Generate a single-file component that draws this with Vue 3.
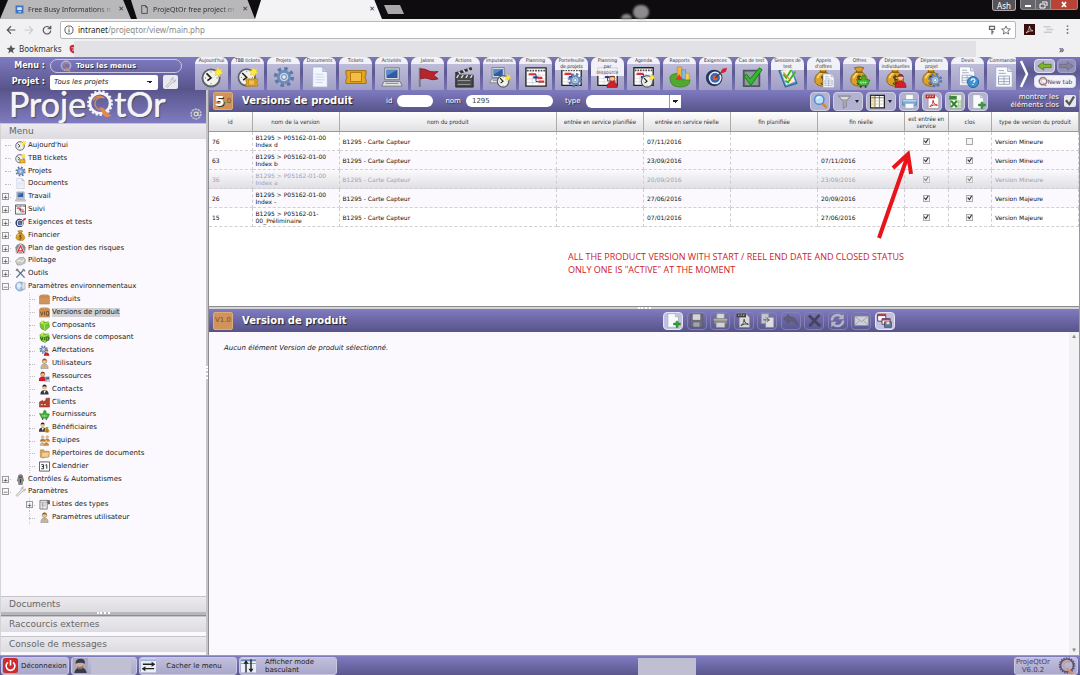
<script setup>
import { ref } from 'vue'

const modules = [
  { label: "Aujourd'hui", icon: 'clock' },
  { label: 'TBB tickets', icon: 'clockticket' },
  { label: 'Projets', icon: 'gear' },
  { label: 'Documents', icon: 'doc' },
  { label: 'Tickets', icon: 'ticket' },
  { label: 'Activités', icon: 'computer' },
  { label: 'Jalons', icon: 'flag' },
  { label: 'Actions', icon: 'clap' },
  { label: 'Imputations', icon: 'computerclock' },
  { label: 'Planning', icon: 'planning' },
  { label: 'Portefeuille\nde projets', icon: 'planninggear' },
  { label: 'Planning\npar\nressource', icon: 'planninguser' },
  { label: 'Agenda', icon: 'agenda' },
  { label: 'Rapports', icon: 'report' },
  { label: 'Exigences', icon: 'target' },
  { label: 'Cas de test', icon: 'testcase' },
  { label: 'Sessions de\ntest', icon: 'session' },
  { label: "Appels\nd'offres", icon: 'bagdoc' },
  { label: 'Offres', icon: 'bagcart' },
  { label: 'Dépenses\nindividuelles', icon: 'baguser' },
  { label: 'Dépenses\nprojet', icon: 'baggear' },
  { label: 'Devis', icon: 'quote' },
  { label: 'Commandes', icon: 'order' },
]

const tree = [
  { label: "Aujourd'hui", icon: 'clock' },
  { label: 'TBB tickets', icon: 'clockticket' },
  { label: 'Projets', icon: 'gear' },
  { label: 'Documents', icon: 'doc' },
  { label: 'Travail', icon: 'computer', box: '+' },
  { label: 'Suivi', icon: 'planning', box: '+' },
  { label: 'Exigences et tests', icon: 'target', box: '+' },
  { label: 'Financier', icon: 'bag', box: '+' },
  { label: 'Plan de gestion des risques', icon: 'risk', box: '+' },
  { label: 'Pilotage', icon: 'pilot', box: '+' },
  { label: 'Outils', icon: 'tools', box: '+' },
  { label: 'Paramètres environnementaux', icon: 'globe', box: '−' },
  { label: 'Produits', icon: 'box', sub: true },
  { label: 'Versions de produit', icon: 'boxv', sub: true, active: true },
  { label: 'Composants', icon: 'component', sub: true },
  { label: 'Versions de composant', icon: 'componentv', sub: true },
  { label: 'Affectations', icon: 'gearuser', sub: true },
  { label: 'Utilisateurs', icon: 'user', sub: true },
  { label: 'Ressources', icon: 'resource', sub: true },
  { label: 'Contacts', icon: 'contact', sub: true },
  { label: 'Clients', icon: 'factory', sub: true },
  { label: 'Fournisseurs', icon: 'cart', sub: true },
  { label: 'Bénéficiaires', icon: 'payee', sub: true },
  { label: 'Equipes', icon: 'team', sub: true },
  { label: 'Répertoires de documents', icon: 'folder', sub: true },
  { label: 'Calendrier', icon: 'calendar', sub: true },
  { label: 'Contrôles & Automatismes', icon: 'robot', box: '+' },
  { label: 'Paramètres', icon: 'wrench', box: '−' },
  { label: 'Listes des types', icon: 'list', sub: true, box: '+' },
  { label: 'Paramètres utilisateur', icon: 'user', sub: true },
]

const columns = [
  { label: 'id', cls: 'c-id' },
  { label: 'nom de la version', cls: 'c-name' },
  { label: 'nom du produit', cls: 'c-product' },
  { label: 'entrée en service planifiée', cls: 'c-date' },
  { label: 'entrée en service réelle', cls: 'c-date' },
  { label: 'fin planifiée', cls: 'c-date' },
  { label: 'fin réelle', cls: 'c-date' },
  { label: 'est entrée en service', cls: 'c-flag' },
  { label: 'clos', cls: 'c-flag' },
  { label: 'type de version du produit', cls: 'c-type' },
]

const rows = ref([
  { id: 76, name: 'B1295 > P05162-01-00 Index d', start: '07/11/2016', end: '', live: true, closed: false, type: 'Version Mineure' },
  { id: 63, name: 'B1295 > P05162-01-00 Index b', start: '23/09/2016', end: '07/11/2016', live: true, closed: true, type: 'Version Mineure' },
  { id: 36, name: 'B1295 > P05162-01-00 Index a', start: '20/09/2016', end: '23/09/2016', live: true, closed: true, type: 'Version Mineure', hover: true },
  { id: 26, name: 'B1295 > P05162-01-00 Index -', start: '27/06/2016', end: '20/09/2016', live: true, closed: true, type: 'Version Majeure' },
  { id: 15, name: 'B1295 > P05162-01-00_Préliminaire', start: '07/01/2016', end: '27/06/2016', live: true, closed: true, type: 'Version Majeure' },
])

const listTools = [
  { icon: 'search', label: 'Rechercher' },
  { icon: 'funnel', label: 'Filtrer', menu: true },
  { icon: 'columns', label: 'Colonnes', menu: true },
  { icon: 'printer', label: 'Imprimer' },
  { icon: 'pdf', label: 'Exporter en PDF' },
  { icon: 'excel', label: 'Exporter en CSV' },
  { icon: 'newdoc', label: 'Créer' },
]

const detailTools = [
  { icon: 'newdoc', label: 'Créer', on: true },
  { icon: 'save', label: 'Enregistrer' },
  { icon: 'printer', label: 'Imprimer', gray: true },
  { icon: 'pdf', label: 'PDF', gray: true },
  { icon: 'copy', label: 'Copier' },
  { icon: 'undo', label: 'Annuler' },
  { icon: 'delete', label: 'Supprimer' },
  { icon: 'refresh', label: 'Rafraîchir' },
  { icon: 'mail', label: 'Courriel' },
  { icon: 'multi', label: 'Mise à jour multiple', on: true },
]

const nameFilter = ref('1295')
const idFilter = ref('')
const showClosed = ref(true)
</script>

<template>
  <div class="page">
    <svg class="sprite" aria-hidden="true">
      <symbol id="gear" viewBox="0 0 24 24">
        <circle cx="12" cy="12" r="9" fill="none" stroke="#5878a6" stroke-width="4" stroke-dasharray="3.6 3.47" />
        <circle cx="12" cy="12" r="6.2" fill="#c3d3e8" stroke="#6c8bb8" stroke-width="3" />
        <circle cx="12" cy="12" r="2.6" fill="#e9eef6" stroke="#5878a6" />
      </symbol>
      <symbol id="clock" viewBox="0 0 24 24">
        <circle cx="11" cy="13" r="9.4" fill="#f3f3ee" stroke="#5c6068" stroke-width="2" />
        <path d="M6 8l5 5-4 3" fill="none" stroke="#222" stroke-width="1.8" />
        <path d="M11 6v1M11 19v1M4.500 13h1M17 13h1" stroke="#555" />
        <path d="M18.500 1l1.500 3 3-1-1 3 2 2-3 .7-.7 3-2.300-2-3 1 1-3-2-2 3-.7z" fill="#ffe93a" stroke="#e4c530" stroke-width=".5" />
      </symbol>
      <symbol id="ticket" viewBox="0 0 24 24">
        <path d="M1 5h22v4q-2.500 3 0 6v4H1v-4q2.500-3 0-6z" fill="#e6a41f" stroke="#9a6a10" />
        <path d="M6 7h12v10H6z" fill="#f4bd43" stroke="#a87512" />
      </symbol>
      <symbol id="clockticket" viewBox="0 0 24 24">
        <use href="#clock" width="23" height="23" />
        <use href="#ticket" x="8" y="11" width="16" height="14" />
      </symbol>
      <symbol id="doc" viewBox="0 0 24 24">
        <path d="M4 1h11l5 5v17H4z" fill="#f3f6fc" stroke="#a9b2cc" />
        <path d="M15 1v5h5z" fill="#c5cde2" stroke="#a9b2cc" />
        <path d="M7 9h9M7 12h10M7 15h10M7 18h8" stroke="#c8d2ea" />
      </symbol>
      <symbol id="computer" viewBox="0 0 24 24">
        <path d="M4 2h16v13H4z" fill="#d7dbe0" stroke="#6b7480" />
        <path d="M6 4h12v9H6z" fill="#2d5ca4" />
        <path d="M6 4h12L6 11z" fill="#5d8acb" />
        <path d="M3 17h18l2 5H1z" fill="#e3e3e3" stroke="#70777f" />
        <path d="M5 19h14" stroke="#888" />
      </symbol>
      <symbol id="flag" viewBox="0 0 24 24">
        <path d="M3 2v21" stroke="#777" stroke-width="2" />
        <path d="M4 3q5 0 8 2t11 1l-5 4 5 4q-6 2-10 0t-9 0z" fill="#b8262d" stroke="#8d1920" />
      </symbol>
      <symbol id="clap" viewBox="0 0 24 24">
        <path d="M3 10h19v13H3z" fill="#484848" stroke="#222" />
        <path d="M2 7L20 1l1 3L3 10z" fill="#333" />
        <path d="M6 6l2 2.500M11 4l2 3M16 2.500l2 3M6 10l-2 3M11 10l-2 3M16 10l-2 3M21 10l-2 3" stroke="#ddd" stroke-width="1.600" />
        <path d="M5 16h14M5 20h14" stroke="#aaa" />
      </symbol>
      <symbol id="computerclock" viewBox="0 0 24 24">
        <use href="#computer" width="20" height="20" />
        <use href="#clock" x="8" y="8" width="16" height="16" />
      </symbol>
      <symbol id="planning" viewBox="0 0 24 24">
        <path d="M1 2h22v20H1z" fill="#fff" stroke="#222" stroke-width="1.500" />
        <path d="M2 5h20" stroke="#555" stroke-width="2" stroke-dasharray="2 1" />
        <path d="M2 10h20M2 14h20M2 18h20M8 6v15M15 6v15" stroke="#c9c9d6" stroke-width=".7" />
        <path d="M4 9h8M14 13h5M15 17h6" stroke="#dc3037" stroke-width="2.400" />
        <path d="M9 12.500h5" stroke="#2b3fae" stroke-width="2.400" />
        <path d="M12 9v8h3" fill="none" stroke="#333" />
      </symbol>
      <symbol id="planninggear" viewBox="0 0 24 24">
        <use href="#planning" width="23" height="23" />
        <use href="#gear" x="7" y="7" width="17" height="17" />
      </symbol>
      <symbol id="user" viewBox="0 0 24 24">
        <path d="M4 23q0-10 8-10t8 10z" fill="#b9b9b9" stroke="#777" />
        <path d="M10 14l2 7 3-7z" fill="#e9a54b" />
        <circle cx="12" cy="7" r="5" fill="#f0c795" stroke="#8a6333" />
        <path d="M7 6q1-5 5-5t5 5q-5-2-10 0z" fill="#8d6030" />
      </symbol>
      <symbol id="reduser" viewBox="0 0 24 24">
        <path d="M3 23q0-10 9-10t9 10z" fill="#d3202b" stroke="#8d1018" />
        <circle cx="12" cy="7" r="5" fill="#f0c795" stroke="#8a3323" />
        <path d="M7 6q1-5 5-5t5 5q-5-2-10 0z" fill="#8d3020" />
      </symbol>
      <symbol id="planninguser" viewBox="0 0 24 24">
        <use href="#planning" width="23" height="23" />
        <use href="#reduser" x="9" y="9" width="15" height="15" />
      </symbol>
      <symbol id="agenda" viewBox="0 0 24 24">
        <use href="#planning" width="23" height="23" />
        <use href="#clock" x="8" y="8" width="16" height="16" />
      </symbol>
      <symbol id="report" viewBox="0 0 24 24">
        <path d="M1 13q0-4 8-5l1 7 13 0q0 8-11 8T1 13z" fill="#4faa2f" stroke="#2d7718" stroke-width=".7" />
        <path d="M9 1h5v12H9z" fill="#f2b632" stroke="#b8801c" stroke-width=".6" />
        <path d="M14 4h4v10h-4z" fill="#8bb9e6" stroke="#4d7dab" stroke-width=".6" />
        <path d="M18 8h4v7h-4z" fill="#f3d34c" stroke="#b8901c" stroke-width=".6" />
        <path d="M7 15l4-6 4 6z" fill="#d83a2c" />
      </symbol>
      <symbol id="target" viewBox="0 0 24 24">
        <circle cx="10" cy="13" r="9" fill="#23365f" />
        <circle cx="11" cy="13" r="7" fill="#e8edf6" />
        <circle cx="11" cy="13" r="5.300" fill="#3e64b0" />
        <circle cx="11" cy="13" r="2.600" fill="#e8602a" />
        <path d="M11 13l8-7" stroke="#444" stroke-width="1.500" />
        <path d="M17 7l2-4 5-1-1 4-4 2z" fill="#d3262e" />
      </symbol>
      <symbol id="testcase" viewBox="0 0 24 24">
        <path d="M3 5h17v17H3z" fill="#8f98a0" stroke="#4f575e" stroke-width="2" />
        <path d="M3 11l3-2 4 5L20 2l3 2-12 17z" fill="#35b62d" stroke="#16791a" />
      </symbol>
      <symbol id="session" viewBox="0 0 24 24">
        <path d="M2 5l13-2 7 16-13 4z" fill="#3f8ccf" stroke="#1f5d99" />
        <path d="M4 5l11-2 5 14-10 4z" fill="#f7f3e3" stroke="#aaa" stroke-width=".6" />
        <path d="M7 9l3 4 7-11M9 16l3 2 8-12" fill="none" stroke="#36b32b" stroke-width="2" />
        <path d="M7 7l8 9" stroke="#e48b23" stroke-width="1.500" />
      </symbol>
      <symbol id="bag" viewBox="0 0 24 24">
        <path d="M9 6L6 2q6-2 11 0l-3 4q8 6 7 12t-10 5-9-7 7-10z" fill="#d9a126" stroke="#8c6110" />
        <path d="M5 14q2-5 5-6" stroke="#f7d76b" stroke-width="2" fill="none" />
        <path d="M8 7h7" stroke="#744c09" stroke-width="1.500" />
        <path d="M14 12q-5-1-4 1.500t3 2 0 3.500-4 0M11.500 10v10" fill="none" stroke="#573a08" stroke-width="1.300" />
      </symbol>
      <symbol id="order" viewBox="0 0 24 24">
        <path d="M3 1h13l5 5v17H3z" fill="#fafbff" stroke="#a0a8bc" />
        <path d="M16 1v5h5" fill="#d8dfee" stroke="#a0a8bc" />
        <path d="M6 5h6M6 8h8M6 11h12v9H6zM6 14h12M6 17h12M12 11v9" fill="none" stroke="#98a3b8" />
      </symbol>
      <symbol id="bagdoc" viewBox="0 0 24 24">
        <use href="#bag" width="23" height="23" />
        <use href="#order" x="9" y="8" width="16" height="16" />
      </symbol>
      <symbol id="cart" viewBox="0 0 24 24">
        <path d="M1 10l7 1 3-8 4 1 1 6 7 1-4 9H6z" fill="#39b22e" stroke="#17731a" />
        <path d="M8 12l1 6M12 12v6M16 12l-1 6M6 15h12" stroke="#b4f09c" />
        <circle cx="8" cy="22" r="1.800" fill="#244" />
        <circle cx="16" cy="22" r="1.800" fill="#244" />
      </symbol>
      <symbol id="bagcart" viewBox="0 0 24 24">
        <use href="#bag" width="23" height="23" />
        <use href="#cart" x="7" y="8" width="17" height="16" />
      </symbol>
      <symbol id="baguser" viewBox="0 0 24 24">
        <use href="#bag" width="23" height="23" />
        <use href="#reduser" x="9" y="8" width="16" height="16" />
      </symbol>
      <symbol id="baggear" viewBox="0 0 24 24">
        <use href="#bag" width="23" height="23" />
        <use href="#gear" x="7" y="7" width="17" height="17" />
      </symbol>
      <symbol id="quote" viewBox="0 0 24 24">
        <use href="#order" width="22" height="22" />
        <circle cx="17.500" cy="17.500" r="6" fill="#3b93d3" stroke="#1d5f97" />
        <path d="M15.500 16q0-2 2-2t2 1.700-2 2.300M17.500 19.500v1.300" fill="none" stroke="#fff" stroke-width="1.400" />
      </symbol>
      <symbol id="risk" viewBox="0 0 24 24">
        <path d="M2 23L1 9q4-8 11-8t11 8l-1 14z" fill="#8a8f96" />
        <path d="M12 2L2 23h5l1-4h8l1 4h5z" fill="#d5262b" stroke="#fff" stroke-width="1.400" />
        <path d="M12 9l-3 7h6z" fill="#fff" />
      </symbol>
      <symbol id="pilot" viewBox="0 0 24 24">
        <path d="M1 13l8-7 10-1 4 6-2 7-9 4H5z" fill="#c9c9c4" stroke="#777" />
        <path d="M4 15q5-6 8-2t8-3" fill="none" stroke="#fff" stroke-width="2" />
      </symbol>
      <symbol id="tools" viewBox="0 0 24 24">
        <path d="M3 2l18 19" stroke="#6f7780" stroke-width="3" />
        <path d="M20 3L3 21" stroke="#456fa6" stroke-width="3" />
        <path d="M2 6l5-4M17 2l5 5" stroke="#888" stroke-width="3" />
      </symbol>
      <symbol id="globe" viewBox="0 0 24 24">
        <circle cx="11" cy="12" r="10" fill="#9fc3e4" stroke="#4f7dad" />
        <path d="M4 7q5-5 8 0t6 1q0 4-5 5t-3 6q-6-2-6-12z" fill="#e3eef6" />
        <path d="M15 4h7v14h-7z" fill="#dfe6ee" stroke="#8290a4" />
      </symbol>
      <symbol id="box" viewBox="0 0 24 24">
        <path d="M1 5l3-3h16l3 3v17H1z" fill="#d0935a" stroke="#a7703d" />
        <path d="M1 6h22M10 2h4v6h-4z" fill="#e6b27d" stroke="#bb7a3e" />
      </symbol>
      <symbol id="boxv" viewBox="0 0 24 24">
        <use href="#box" />
        <path d="M3 10l3 8 3-8M12 10v8M16 10h5v8h-5z" fill="none" stroke="#5a3a1a" stroke-width="1.500" />
      </symbol>
      <symbol id="component" viewBox="0 0 24 24">
        <path d="M2 6l8-4 3 3 8-1 2 11-9 8-8-3-3-4z" fill="#74c62c" stroke="#3c8c15" />
        <path d="M2 6l9 3 11-4M11 9l2 13" fill="none" stroke="#c8f08a" stroke-width="1.500" />
        <circle cx="7" cy="4" r="3" fill="#e7df3d" />
      </symbol>
      <symbol id="componentv" viewBox="0 0 24 24">
        <use href="#component" />
        <path d="M3 11l3 7 3-7M12 11v7M16 11h5v7h-5z" fill="none" stroke="#1c4208" stroke-width="1.500" />
      </symbol>
      <symbol id="gearuser" viewBox="0 0 24 24">
        <use href="#gear" width="20" height="20" />
        <use href="#reduser" x="9" y="9" width="15" height="15" />
      </symbol>
      <symbol id="resource" viewBox="0 0 24 24">
        <use href="#reduser" x="-3" width="22" height="23" />
        <use href="#computer" x="12" y="11" width="13" height="13" />
      </symbol>
      <symbol id="contact" viewBox="0 0 24 24">
        <path d="M3 23q0-10 9-10t9 10z" fill="#35383d" />
        <path d="M10 14l2 7 3-7z" fill="#fff" />
        <circle cx="12" cy="7" r="5" fill="#e9bd8a" />
        <path d="M7 6q1-5 5-5t5 5q-5-2-10 0z" fill="#222" />
      </symbol>
      <symbol id="factory" viewBox="0 0 24 24">
        <path d="M1 22V11l7-4v4l7-4V3l8-1v20z" fill="#b6402f" stroke="#71251b" />
        <path d="M4 15h4v3H4zM11 15h4v3h-4z" fill="#f0c79a" />
      </symbol>
      <symbol id="payee" viewBox="0 0 24 24">
        <use href="#contact" x="-3" width="22" height="22" />
        <use href="#bag" x="11" y="10" width="13" height="14" />
      </symbol>
      <symbol id="orangeuser" viewBox="0 0 24 24">
        <path d="M3 23q0-10 9-10t9 10z" fill="#dd8a2c" stroke="#96591a" />
        <circle cx="12" cy="7" r="5" fill="#f0c795" stroke="#8a6333" />
      </symbol>
      <symbol id="team" viewBox="0 0 24 24">
        <use href="#orangeuser" width="14" height="15" x="1" />
        <use href="#orangeuser" width="14" height="15" x="11" />
        <use href="#user" width="14" height="15" y="9" />
        <use href="#orangeuser" width="14" height="15" x="9" y="9" />
      </symbol>
      <symbol id="folder" viewBox="0 0 24 24">
        <path d="M3 4h7l2 3h10v12L8 22l-5-2z" fill="#d9a35a" stroke="#a3732f" />
        <path d="M6 9h17l-3 11H5z" fill="#f0cd90" stroke="#b98a45" />
      </symbol>
      <symbol id="calendar" viewBox="0 0 24 24">
        <path d="M1 2h22v20H1z" fill="#fff" stroke="#555" stroke-width="2" />
        <path d="M5 8h5v9H5M6 12h4M14 9l3-1v9" fill="none" stroke="#222" stroke-width="2" />
      </symbol>
      <symbol id="robot" viewBox="0 0 24 24">
        <path d="M7 7q0-6 5-6t5 6l2 8-3 2v6H8v-6l-3-2z" fill="#8b8b8b" stroke="#444" />
        <path d="M9 7h6M12 11v8" stroke="#333" stroke-width="2" />
      </symbol>
      <symbol id="wrench" viewBox="0 0 24 24">
        <path d="M2 20L13 9q-1-6 5-8l-1 5 3 2 3-2q0 7-7 6L5 23z" fill="#e5e5e5" stroke="#8b8b8b" />
      </symbol>
      <symbol id="list" viewBox="0 0 24 24">
        <path d="M2 3h16v19H2z" fill="#eee" stroke="#555" stroke-width="1.500" />
        <path d="M2 7h16M8 7v15M5 11h10M5 15h10" stroke="#777" />
        <path d="M18 3h5v8h-4" fill="#666" stroke="#333" />
      </symbol>
      <symbol id="search" viewBox="0 0 24 24">
        <path d="M15 15l7 7" stroke="#d28a33" stroke-width="4" />
        <circle cx="10" cy="9" r="7.500" fill="#bfe0fa" stroke="#4d8fd3" stroke-width="2.500" />
        <path d="M6 8q1-3 5-3" fill="none" stroke="#fff" stroke-width="2" />
      </symbol>
      <symbol id="funnel" viewBox="0 0 24 24">
        <path d="M2 3h20l-7 9v8l-5 3V12z" fill="#a9a9b0" stroke="#77777f" />
        <path d="M5 5h14l-3 3H8z" fill="#e7e7ea" />
      </symbol>
      <symbol id="columns" viewBox="0 0 24 24">
        <path d="M1 2h22v20H1z" fill="#fff" stroke="#222" stroke-width="2" />
        <path d="M2 3h6v18H2z" fill="#f7e6b5" />
        <path d="M2 6h20M8 3v18M15 3v18" stroke="#554" stroke-width="1.200" />
        <path d="M2 11h20M2 16h20" stroke="#c9b98a" />
      </symbol>
      <symbol id="printer" viewBox="0 0 24 24">
        <path d="M6 1h12v9H6z" fill="#fff" stroke="#9aa" />
        <path d="M1 9h22v9H1z" fill="#7ba9d8" stroke="#4778ab" />
        <path d="M1 9h22v3H1z" fill="#b7d2ee" />
        <path d="M5 15h14v8H5z" fill="#f6f9ff" stroke="#8aa" />
      </symbol>
      <symbol id="pdf" viewBox="0 0 24 24">
        <path d="M5 2h12l5 5v16H5z" fill="#fff" stroke="#888" />
        <path d="M1 1h15v6H1z" fill="#c9241f" />
        <path d="M4 5V3h2M8 5V3h2M12 5V3h2" stroke="#fff" fill="none" />
        <path d="M8 20q6-4 5-10 0 6 7 8-6-2-12 2z" fill="none" stroke="#c9241f" stroke-width="1.500" />
      </symbol>
      <symbol id="excel" viewBox="0 0 24 24">
        <path d="M4 1h18v22H4z" fill="#f1f7ee" stroke="#7aa86e" />
        <path d="M2 3h12v6H2z" fill="#3a8b36" />
        <path d="M12 11h9v10h-9M12 14h9M12 18h9M17 11v10" fill="none" stroke="#7fb870" />
        <path d="M5 11l9 10M14 11L5 21" stroke="#2e7f2b" stroke-width="3" />
      </symbol>
      <symbol id="newdoc" viewBox="0 0 24 24">
        <path d="M3 1h12l5 5v17H3z" fill="#f8faff" stroke="#9aa3b8" />
        <path d="M15 1v5h5" fill="#cfd7e8" stroke="#9aa3b8" />
        <path d="M16 13h3v3h4v3h-4v4h-3v-4h-4v-3h4z" fill="#32a72a" stroke="#177018" stroke-width=".7" />
      </symbol>
      <symbol id="save" viewBox="0 0 24 24">
        <path d="M2 2h20v20H2z" fill="#6c6b7a" stroke="#55546a" />
        <path d="M6 2h12v9H6z" fill="#d4d4da" />
        <path d="M7 15h10v7H7z" fill="#a3a3ad" />
      </symbol>
      <symbol id="copy" viewBox="0 0 24 24">
        <path d="M2 1h12v16H2z" fill="#c6c6cd" stroke="#8a8a96" />
        <path d="M9 7h13v16H9z" fill="#dddde2" stroke="#8a8a96" />
        <path d="M5 11h9M11 8l4 3-4 3" stroke="#555" stroke-width="1.500" fill="none" />
      </symbol>
      <symbol id="undo" viewBox="0 0 24 24">
        <path d="M1 9l8-7v4q13-1 14 14-4-9-14-7v4z" fill="#5f5e78" stroke="#54536e" />
      </symbol>
      <symbol id="delete" viewBox="0 0 24 24">
        <path d="M3 4l18 17M20 3L4 21" stroke="#45445c" stroke-width="4.500" />
      </symbol>
      <symbol id="refresh" viewBox="0 0 24 24">
        <path d="M3 12a9 9 0 0 1 15-6.500M21 12a9 9 0 0 1-15 6.500" fill="none" stroke="#b5b4c5" stroke-width="4" />
        <path d="M22 1v9h-9zM2 23v-9h9z" fill="#b5b4c5" />
      </symbol>
      <symbol id="mail" viewBox="0 0 24 24">
        <path d="M1 5h22v15H1z" fill="#cfcfd6" stroke="#8f8fa0" />
        <path d="M1 5l11 9L23 5M1 20l8-8M23 20l-8-8" fill="none" stroke="#9797a8" stroke-width="1.300" />
      </symbol>
      <symbol id="multi" viewBox="0 0 24 24">
        <path d="M1 2h13v11H1z" fill="#fff" stroke="#35476f" stroke-width="1.500" />
        <path d="M1 2h13v3H1z" fill="#c23540" />
        <path d="M8 9h13v9H8z" fill="#fff" stroke="#35476f" stroke-width="1.500" />
        <path d="M8 9h13v3H8z" fill="#c23540" />
        <path d="M12 14h11v9H12z" fill="#66779a" stroke="#334" />
        <path d="M15 14h5v4h-5z" fill="#ddd" />
      </symbol>
      <symbol id="qlogo" viewBox="0 0 32 32">
        <circle cx="16" cy="15" r="13.500" fill="none" stroke="currentColor" stroke-width="2.500" stroke-dasharray="2.600 2.110" />
        <circle cx="16" cy="15" r="11.500" fill="none" stroke="currentColor" stroke-width="3" />
        <path d="M8 12q5-8 13-3-7-2-10 3-3 7 5 11" fill="none" stroke="#e08a4c" stroke-width="1.500" />
        <path d="M15 20q5-1 7 3t7 6q-5 4-9 0-2-4-5-9z" fill="#e08a4c" />
      </symbol>
      <symbol id="power" viewBox="0 0 24 24">
        <rect width="24" height="24" rx="4" fill="#cf2a2d" />
        <path d="M8 7a7 7 0 1 0 8 0M12 3v9" fill="none" stroke="#fff" stroke-width="2.600" />
      </symbol>
      <symbol id="avatar" viewBox="0 0 24 24">
        <rect width="24" height="24" fill="#a9a9b6" />
        <path d="M2 24q1-9 10-9t10 9z" fill="#38394a" />
        <circle cx="11" cy="11" r="6" fill="#d1ac9c" />
        <path d="M4 9q0-8 8-8t7 8q-7-3-15 0z" fill="#343a52" />
        <path d="M6 13q5 3 11-1-1 7-6 6-4 0-5-5z" fill="#8b7470" />
      </symbol>
      <symbol id="swaph" viewBox="0 0 24 24">
        <path d="M0 1h24v22H0z" fill="#e9f0f8" /><path d="M0 2h24v3H0z" fill="#9ab7db" />
        <path d="M3 10h16M5 17h16" stroke="#222" stroke-width="2.200" />
        <path d="M17 6l6 4-6 4zM7 13l-6 4 6 4z" fill="#222" />
      </symbol>
      <symbol id="swapv" viewBox="0 0 24 24">
        <path d="M0 1h24v22H0z" fill="#e9f0f8" /><path d="M0 2h24v3H0zM0 8h24v1H0z" fill="#6a8cb8" />
        <path d="M8 6v17M16 2v18" stroke="#222" stroke-width="2.200" />
        <path d="M4 9l4-6 4 6zM12 17l4 6 4-6z" fill="#222" />
      </symbol>
    </svg>

    <header class="browser">
      <div class="tabstrip">
        <div class="tab tab-a">
          <svg class="fav" viewBox="0 0 16 16"><path d="M1 1h14v14H1z" fill="#3f74c7" /><path d="M4 4h8v5H4zM6 11h5v2H6z" fill="#dce8fa" /></svg>
          <span class="tabtext">Free Busy Informations n</span><button class="x" aria-label="Fermer">✕</button>
        </div>
        <div class="tab tab-b">
          <svg class="fav" viewBox="0 0 16 16"><path d="M3 1h7l3 3v11H3zM10 1v3h3" fill="none" stroke="#444" stroke-width="1.500" /></svg>
          <span class="tabtext">ProjeQtOr free project m</span><button class="x" aria-label="Fermer">✕</button>
        </div>
        <div class="tab tab-c"><span class="tabtext"></span><button class="x" aria-label="Fermer">✕</button></div>
        <button class="newtab" aria-label="Nouvel onglet"></button>
        <div class="wallpaper"><i></i><b></b></div>
        <button class="profile">Ash</button>
        <div class="winbtns">
          <button aria-label="Réduire"><svg viewBox="0 0 10 8"><path d="M2 5h6" stroke="#fff" stroke-width="2" /></svg></button>
          <button aria-label="Restaurer"><svg viewBox="0 0 10 8"><path d="M2 3h5v4H2zM4 1h5v4" fill="none" stroke="#fff" /></svg></button>
          <button class="close" aria-label="Fermer la fenêtre"><svg viewBox="0 0 10 8"><path d="M3 1l4 5M7 1L3 6" stroke="#fff" stroke-width="1.800" /></svg></button>
        </div>
      </div>
      <div class="address">
        <svg class="nav-i" viewBox="0 0 16 16"><path d="M15 8H2M8 2L2 8l6 6" fill="none" stroke="#555" stroke-width="1.800" /></svg>
        <svg class="nav-i" viewBox="0 0 16 16"><path d="M1 8h13M8 2l6 6-6 6" fill="none" stroke="#ccc" stroke-width="1.800" /></svg>
        <svg class="nav-i" viewBox="0 0 16 16"><path d="M13 5a6 6 0 1 0 1 4M14 1v5H9" fill="none" stroke="#555" stroke-width="1.900" /></svg>
        <div class="urlbox">
          <svg class="info" viewBox="0 0 16 16"><circle cx="8" cy="8" r="6.500" fill="none" stroke="#555" stroke-width="1.500" /><path d="M8 7v5M8 4v1.500" stroke="#555" stroke-width="1.600" /></svg>
          <span class="url"><b>intranet</b>/projeqtor/view/main.php</span>
          <svg class="info" viewBox="0 0 16 16"><path d="M4 2h8v5H4zM8 7v8M8 11h3" fill="none" stroke="#666" stroke-width="2" /></svg>
          <svg class="info" viewBox="0 0 16 16"><path d="M8 1.500l2 4.500 5 .5-4 3.300 1.300 4.700L8 12l-4.300 2.500L5 9.800 1 6.500l5-.5z" fill="none" stroke="#555" stroke-width="1.300" /></svg>
        </div>
        <svg class="ext" viewBox="0 0 16 16"><path d="M0 0h16v16H0z" fill="#3a0c0c" /><path d="M3 13q5-4 5-10 0 6 5 7-5-1-10 3z" fill="none" stroke="#eee" /></svg>
        <svg class="ext" viewBox="0 0 16 16"><path d="M1 4h10M5 8h10M1 12h12" stroke="#ccc" stroke-width="2" /></svg>
        <svg class="ext" viewBox="0 0 16 16"><path d="M8 2v2M8 7v2M8 12v2" stroke="#555" stroke-width="2.200" /></svg>
      </div>
      <div class="bookmarks">
        <svg class="star" viewBox="0 0 16 16"><path d="M8 1l2 5 5 .5-4 3.500 1.300 5L8 12l-4.300 3L5 10 1 6.500 6 6z" fill="#555" /></svg>
        <span>Bookmarks</span>
        <svg class="bm" viewBox="0 0 8 16"><path d="M8 1Q0 1 1 7q0 6 7 8z" fill="#c62b34" /><path d="M4 6h4v4H5" stroke="#fff" fill="none" /></svg>
        <div class="smudge"></div><span class="more">»</span>
      </div>
    </header>

    <div class="apptop">
      <div class="selectors">
        <div class="selrow"><span class="sellabel">Menu :</span>
          <button class="menupill"><svg class="pillq"><use href="#qlogo" /></svg>Tous les menus</button></div>
        <div class="selrow"><label class="sellabel" for="projet">Projet :</label>
          <select id="projet" class="projsel"><option>Tous les projets</option></select>
          <button class="wrenchbtn" aria-label="Options"><svg><use href="#wrench" /></svg></button></div>
      </div>
      <nav class="modules">
        <button v-for="m in modules" :key="m.label" class="module">
          <span>{{ m.label }}</span><svg><use :href="'#' + m.icon" /></svg>
        </button>
      </nav>
      <svg class="chevron" viewBox="0 0 10 28"><path d="M2 1l6 13-6 13" fill="none" stroke="#fff" stroke-width="2.500" /></svg>
      <div class="history">
        <button aria-label="Précédent"><svg viewBox="0 0 18 12"><path d="M1 6l7-5v3h9v4H8v3z" fill="#7fb52b" stroke="#4f7d15" /></svg></button>
        <button class="off" aria-label="Suivant"><svg viewBox="0 0 18 12"><path d="M17 6l-7-5v3H1v4h9v3z" fill="#85839c" stroke="#6d6b88" /></svg></button>
        <button class="newt"><svg><use href="#qlogo" /></svg>New tab</button>
      </div>
    </div>

    <div class="body">
      <aside class="side">
        <div class="brand"><span>Proje</span><svg class="bigq"><use href="#qlogo" /></svg><span>tOr</span>
          <svg class="at" viewBox="0 0 16 16"><circle cx="8" cy="8" r="6.500" fill="#777a9d" stroke="#c4c4d6" stroke-width="2" stroke-dasharray="3 1" /><circle cx="8" cy="8" r="2.500" fill="none" stroke="#ddd" stroke-width="1.500" /><path d="M11 5v5h3" fill="none" stroke="#ddd" /></svg>
        </div>
        <h2 class="acc">Menu</h2>
        <div class="treewrap">
          <ul class="tree">
            <li v-for="(n, i) in tree" :key="i" :class="{ sub: n.sub }">
              <span class="hook"><button v-if="n.box" class="pm">{{ n.box }}</button></span>
              <svg><use :href="'#' + n.icon" /></svg>
              <a href="#" :class="{ active: n.active }">{{ n.label }}</a>
            </li>
          </ul>
        </div>
        <h2 class="acc">Documents</h2>
        <div class="hsplit sidesplit"><i></i></div>
        <h2 class="acc">Raccourcis externes</h2>
        <div class="gap"></div>
        <h2 class="acc">Console de messages</h2>
        <div class="gap small"></div>
      </aside>
      <div class="vsplit"><i></i></div>

      <main class="main">
        <section class="list">
          <div class="bar">
            <span class="titleicon"><b>5</b>.0</span>
            <h1>Versions de produit</h1>
            <label for="fid">id</label><input id="fid" v-model="idFilter" class="fid" type="text" />
            <label for="fnom">nom</label><input id="fnom" v-model="nameFilter" class="fnom" type="text" />
            <label for="ftype">type</label><select id="ftype" class="ftype"><option></option></select>
            <div class="tools">
              <button v-for="t in listTools" :key="t.icon" :aria-label="t.label" class="tool" :class="{ wide: t.menu }">
                <svg><use :href="'#' + t.icon" /></svg><i v-if="t.menu"></i>
              </button>
            </div>
            <label class="closedlabel" for="closed">montrer les<br />éléments clos</label>
            <input id="closed" v-model="showClosed" class="closed" type="checkbox" />
          </div>
          <table>
            <thead><tr><th v-for="c in columns" :key="c.label" :class="c.cls">{{ c.label }}</th></tr></thead>
            <tbody>
              <tr v-for="r in rows" :key="r.id" :class="{ hover: r.hover }">
                <td>{{ r.id }}</td><td>{{ r.name }}</td><td>B1295 - Carte Capteur</td><td></td>
                <td>{{ r.start }}</td><td></td><td>{{ r.end }}</td>
                <td><input v-model="r.live" type="checkbox" aria-label="est entrée en service" /></td>
                <td><input v-model="r.closed" type="checkbox" aria-label="clos" /></td>
                <td>{{ r.type }}</td>
              </tr>
            </tbody>
          </table>
          <p class="note">ALL THE PRODUCT VERSION WITH START / REEL END DATE AND CLOSED STATUS<br />ONLY ONE IS "ACTIVE" AT THE MOMENT</p>
          <svg class="arrow" viewBox="0 0 50 92"><path d="M14 90L43 7M28 20L43 6l3 20" fill="none" stroke="#e9141a" stroke-width="4" /></svg>
        </section>
        <div class="hsplit mainsplit"><i></i></div>
        <section class="detail">
          <div class="bar bar2">
            <span class="titleicon">V1.0</span>
            <h1>Version de produit</h1>
            <div class="tools2">
              <button v-for="t in detailTools" :key="t.label" :aria-label="t.label" class="dtool" :class="{ on: t.on, gray: t.gray }">
                <svg><use :href="'#' + t.icon" /></svg>
              </button>
            </div>
          </div>
          <div class="detailbody"><p>Aucun élément Version de produit sélectionné.</p>
            <div class="scroll"><span>▴</span><span>▾</span></div></div>
        </section>
      </main>
    </div>

    <footer class="status">
      <button class="s1"><svg><use href="#power" /></svg><span>Déconnexion</span></button>
      <button class="s2" aria-label="Profil"><svg><use href="#avatar" /></svg><i></i></button>
      <button class="s3"><svg><use href="#swaph" /></svg><span>Cacher le menu</span></button>
      <button class="s4"><svg><use href="#swapv" /></svg><span>Afficher mode basculant</span></button>
      <div class="msg"></div>
      <button class="ver"><span>ProjeQtOr<br />V6.0.2</span><svg><use href="#qlogo" /></svg></button>
    </footer>
  </div>
</template>

<style>
body { background: #fff; }
</style>

<style scoped>
* { box-sizing: border-box; }
.page { display: flex; flex-direction: column; height: 100vh; overflow: hidden; font: 7px/9px "DejaVu Sans", sans-serif; color: #222; background: #fbf9fd; }
button, input, select { font: inherit; color: inherit; margin: 0; padding: 0; border: 0; background: none; }
button { display: flex; align-items: center; }
svg { display: block; flex: none; }
h1, h2, p, ul { margin: 0; padding: 0; list-style: none; }
.sprite { position: absolute; width: 0; height: 0; }

.browser { flex: none; font-family: "Noto Sans", sans-serif; background: #f1f0f3; }
.tabstrip { display: flex; height: 19px; background: #0e0c0e; }
.tab { display: flex; align-items: center; gap: 4px; height: 19px; padding: 0 7px; background: #b8b7b9; color: #333; }
.tab-a { width: 131px; padding-left: 15px; clip-path: polygon(8px 0, 94% 0, 100% 100%, 0 100%); }
.tab-b { width: 124px; padding-left: 9px; clip-path: polygon(0 0, 94% 0, 100% 100%, 6px 100%); }
.tab-c { width: 127px; padding-left: 12px; background: #f3f2f5; clip-path: polygon(6px 0, 94% 0, 100% 100%, 0 100%); }
.fav { width: 9px; height: 9px; }
.tabtext { flex: 1; white-space: nowrap; font-size: 7px; line-height: 12px; mask-image: linear-gradient(90deg, #000 80%, transparent); }
.x { font: 7px/9px "DejaVu Sans", sans-serif; color: #333; }
.newtab { width: 20px; height: 9px; margin: 5px 0 0 2px; background: #a9a8ab; clip-path: polygon(0 0, 80% 0, 100% 100%, 20% 100%); }
.wallpaper { flex: 1; display: flex; justify-content: flex-end; align-items: flex-end; gap: 1px; padding-right: 343px; filter: blur(1px); overflow: hidden; }
.wallpaper i { width: 11px; height: 5px; border-radius: 5px 5px 0 0; background: #888; }
.wallpaper b { width: 16px; height: 14px; border-radius: 7px; background: #8c8c8e; }
.profile { height: 11px; width: 24px; justify-content: center; background: #555358; border: 1px solid #aaa; border-top: 0; border-radius: 0 0 3px 3px; color: #fff; font-size: 8px; margin-right: 4px; }
.winbtns { display: flex; height: 10px; margin-right: 2px; border: 1px solid #8b8b8f; border-top: 0; border-radius: 0 0 3px 3px; background: #66656b; overflow: hidden; }
.winbtns button { width: 15px; justify-content: center; border-right: 1px solid #999; }
.winbtns .close { width: 26px; background: #b84438; border: 0; }
.winbtns svg { width: 10px; height: 8px; }
.address { display: flex; align-items: center; height: 21px; padding: 0 7px 0 6px; gap: 8px; }
.nav-i { width: 10px; height: 10px; }
.urlbox { flex: 1; display: flex; align-items: center; gap: 3px; height: 18px; padding: 0 3px; background: #fff; border: 1px solid #b8b7bb; border-radius: 2px; }
.info { width: 10px; height: 10px; margin-right: 1px; }
.url { flex: 1; font-size: 8px; line-height: 12px; color: #888; }
.url b { font-weight: 400; color: #222; }
.ext { width: 11px; height: 11px; }
.bookmarks { display: flex; align-items: center; height: 17px; padding-left: 6px; font-size: 8px; line-height: 12px; color: #333; }
.star { width: 10px; height: 10px; margin-right: 3px; }
.bm { width: 5px; height: 10px; margin-left: 7px; }
.smudge { flex: 1; height: 16px; background: #e2e1e6; }
.more { width: 104px; padding-left: 83px; font-size: 10px; }

.apptop { flex: none; display: flex; height: 33px; background: linear-gradient(#7b77b9 0, #5c5890 45%, #7a76b6 100%); overflow: hidden; }
.selectors { width: 195px; padding-top: 1px; background: linear-gradient(#7f7bc0, #57538a); }
.selrow { display: flex; align-items: center; height: 16px; gap: 5px; }
.sellabel { width: 45px; text-align: right; font-weight: 700; font-size: 8px; line-height: 12px; color: #fff; text-shadow: 1px 1px 1px #222; white-space: nowrap; }
.menupill { width: 132px; height: 14px; padding-left: 9px; gap: 4px; border: 1px solid #c9c7e4; border-radius: 7px; color: #fff; font-weight: 700; text-shadow: 1px 1px 1px #222; }
.pillq { width: 12px; height: 12px; color: #b9b7d4; }
.projsel { width: 108px; height: 15px; padding-left: 4px; background: #fff; border-radius: 2px; font-style: italic; appearance: none; background-image: linear-gradient(45deg, transparent 50%, #222 50%), linear-gradient(-45deg, transparent 50%, #222 50%); background-size: 3px 3px; background-repeat: no-repeat; background-position: 97px 6px, 100px 6px; transform: none; }
.projsel { background-image: linear-gradient(to top right, transparent 50%, #222 50%), linear-gradient(to top left, transparent 50%, #222 50%); }
.wrenchbtn { width: 15px; height: 14px; justify-content: center; background: #e9e8ef; border-radius: 2px; }
.wrenchbtn svg { width: 11px; height: 11px; }
.modules { flex: 1; display: flex; gap: 3px; overflow: hidden; }
.module { flex: none; width: 33px; height: 33px; position: relative; flex-direction: column; background: linear-gradient(#c7c5de, #a19ec6); border-radius: 7px 7px 0 0; overflow: hidden; justify-content: flex-end; padding-bottom: 2px; }
.module span { position: absolute; top: 0; left: 0; right: 0; padding-bottom: 1px; background: rgba(250, 249, 253, .85); font: 5px/6px "DejaVu Sans Condensed", "DejaVu Sans", sans-serif; color: #333; text-align: center; z-index: 1; white-space: pre-line; }
.module svg { width: 22px; height: 22px; }
.chevron { width: 10px; height: 28px; margin: 3px 5px 0 3px; }
.history { display: grid; grid-template-columns: 21px 19px; grid-template-rows: 14px 13px; gap: 2px; padding: 2px 4px 0 0; }
.history button { justify-content: center; border-radius: 4px; background: #b9b7d6; border: 1px solid #dddcec; }
.history button svg { width: 15px; height: 10px; }
.history .off { background: #928fb8; border-color: #a5a2c8; }
.history .newt { grid-column: 1 / 3; background: #f3f2f8; font-size: 6px; color: #43406a; white-space: nowrap; }
.history .newt svg { width: 10px; height: 11px; color: #6d5a70; }

.body { flex: 1; min-height: 0; display: flex; }
.side { width: 206px; display: flex; flex-direction: column; border-left: 1px solid #d4d3d8; }
.brand { flex: none; position: relative; display: flex; align-items: flex-start; height: 33px; padding-left: 9px; background: linear-gradient(#5a568c, #7f7bc0); color: #f4f3fa; font: 34px/28px Lato, sans-serif; margin-left: -1px; overflow: hidden; text-shadow: 0 0 1px #fff, 1px 1px 1px #444; }
.bigq { width: 28px; height: 28px; }
.at { position: absolute; right: 4px; bottom: 3px; width: 12px; height: 12px; }
.acc { flex: none; height: 16px; padding-left: 8px; border-top: 1px solid #c5c4c9; background: linear-gradient(#eceaee, #dcdbdf); font-size: 9px; font-weight: 400; line-height: 15px; color: #666; }
.treewrap { flex: 1; min-height: 0; overflow: hidden; }
.tree { display: grid; grid-auto-rows: 1fr; height: 385px; }
.tree li { display: flex; align-items: center; }
.tree svg { width: 11px; height: 11px; margin-right: 2px; }
.hook { position: relative; width: 14px; align-self: stretch; display: flex; align-items: center; }
.hook::before { content: ""; position: absolute; left: 4px; right: 4px; top: 50%; border-top: 1px dotted #bbb; }
.sub .hook { margin-left: 24px; }
.sub .hook::after { content: ""; position: absolute; left: 4px; top: 0; bottom: 0; border-left: 1px dotted #ccc; }
.pm { position: relative; z-index: 1; width: 7px; height: 7px; margin-left: 1px; justify-content: center; background: #f8f8f8; border: 1px solid #999; font-size: 6px; line-height: 5px; }
.tree a { color: #222; text-decoration: none; line-height: 9px; white-space: nowrap; }
.tree a.active { background: #d2d1d4; }
.hsplit { flex: none; height: 3px; background: #b8b7bb; border-bottom: 1px solid #8d8c90; display: flex; justify-content: center; }
.hsplit i { width: 13px; border-top: 2px dotted #fff; }
.sidesplit { height: 4px; }
.gap { flex: none; height: 4px; background: #fbf9fd; }
.small { height: 3px; }
.vsplit { flex: none; width: 3px; background: #c6c5c9; border-right: 1px solid #8d8c90; display: flex; align-items: center; }
.vsplit i { height: 13px; border-left: 2px dotted #fff; }

.main { flex: 1; min-width: 0; display: flex; flex-direction: column; border-right: 1px solid #99989c; }
.list { position: relative; flex: none; height: 216px; background: #fff; }
.bar { display: flex; align-items: center; height: 22px; padding: 0 3px 0 4px; background: linear-gradient(#7f7bc0, #57538a); color: #fff; }
.bar h1 { width: 144px; margin-left: 9px; font-size: 10px; line-height: 14px; text-shadow: 1px 1px 1px #222; white-space: nowrap; }
.titleicon { width: 20px; height: 18px; display: flex; align-items: center; justify-content: center; background: #d0935a; border: 1px solid #dcab78; border-radius: 2px; color: #7c4a1d; font-size: 7px; }
.titleicon b { font-size: 14px; color: #fff; text-shadow: 1px 1px 0 #333; }
.bar label { text-shadow: 1px 1px 1px #333; }
.bar input[type="text"] { height: 12px; background: #fff; border-radius: 6px; color: #444; padding: 0 6px; }
.bar .fid { width: 36px; margin: 0 12px 0 5px; }
.bar .fnom { width: 87px; margin: 0 12px 0 5px; }
.ftype { width: 95px; height: 13px; margin-left: 5px; border-radius: 6px 0 0 6px; background: #fff; appearance: none; background-image: linear-gradient(to top right, transparent 50%, #222 50%), linear-gradient(to top left, transparent 50%, #222 50%), linear-gradient(#999, #999); background-repeat: no-repeat; background-size: 3px 3px, 3px 3px, 1px 13px; background-position: 86px 5px, 89px 5px, 83px 0; }
.tools { display: flex; gap: 3px; margin-left: auto; }
.tool { width: 20px; height: 19px; justify-content: center; background: #b3b1d2; border: 1px solid #cfcde4; border-radius: 4px; }
.tool svg { width: 15px; height: 15px; }
.wide { width: 30px; gap: 3px; }
.wide i { border: 2px solid transparent; border-top: 3px solid #222; border-bottom: 0; }
.closedlabel { width: 71px; text-align: right; margin-right: 5px; line-height: 8px; }
input[type="checkbox"] { appearance: none; display: block; width: 7px; height: 7px; margin: 0 auto; border: 1px solid #aaa; background: #f4f4f4; }
input[type="checkbox"]:checked::after { content: ""; display: block; width: 5px; height: 5px; background: #333; clip-path: polygon(0 50%, 20% 35%, 40% 65%, 80% 0, 100% 10%, 45% 100%); }
.bar .closed { width: 12px; height: 12px; margin: 0; border: 0; border-radius: 2px; background: #e8e7ee; }
.bar .closed:checked::after { width: 10px; height: 10px; margin: 1px; background: #555; }

table { width: 100%; table-layout: fixed; border-collapse: separate; border-spacing: 0; font-size: 6px; line-height: 7px; color: #111; }
th { height: 20px; padding: 0 2px; font-family: "DejaVu Sans Condensed", "DejaVu Sans", sans-serif; font-weight: 400; color: #333; background: linear-gradient(#fefefe, #e1e0e3); border-right: 1px solid #aaa; border-bottom: 1px solid #999; }
td { height: 19px; padding: 0 3px; border-right: 1px dashed #cfcdd2; border-bottom: 1px dashed #d2d0d4; }
tbody tr:nth-child(even) { background: #fbf9fd; }
tbody .hover { color: #a09fb8; background: linear-gradient(#fafafc, #dfdee2); }
.hover input { opacity: .6; }
.c-id { width: 5%; }
.c-name { width: 10%; }
.c-product { width: 25%; }
.c-date { width: 10%; }
.c-flag { width: 5%; }
.c-type { width: 10%; }
.note { position: absolute; left: 359px; top: 160px; font: 9px/13px "Open Sans", sans-serif; color: #cc2229; white-space: nowrap; }
.arrow { position: absolute; left: 656px; top: 58px; width: 50px; height: 92px; }
.mainsplit { background: #d4d3d8; border-top: 1px solid #8d8c90; border-bottom: 0; }

.detail { flex: 1; min-height: 0; display: flex; flex-direction: column; }
.bar2 { flex: none; height: 23px; }
.tools2 { display: flex; justify-content: space-between; width: 232px; margin: 0 auto 0 277px; }
.dtool { width: 20px; height: 18px; justify-content: center; border: 1px solid #8481b5; border-radius: 4px; }
.dtool svg { width: 15px; height: 15px; }
.on { background: #c3c1dd; border-color: #e5e4f2; }
.gray svg { filter: grayscale(1) brightness(.85); }
.detailbody { flex: 1; display: flex; justify-content: space-between; background: #fbf9fd; }
.detailbody p { padding: 12px 15px; font-style: italic; }
.scroll { width: 10px; display: flex; flex-direction: column; justify-content: space-between; align-items: center; background: #f1f0f3; color: #888; }

.status { flex: none; display: flex; align-items: center; height: 20px; padding: 0 2px 0 1px; gap: 2px; background: linear-gradient(#7f7bc0, #5b578e); border-top: 1px solid #9d9bb8; color: #222; }
.status button { height: 18px; gap: 3px; padding: 0 1px; background: linear-gradient(#c1bfdb, #a9a7cc); border: 1px solid #c9c8e0; border-radius: 3px; line-height: 8px; }
.status svg { width: 15px; height: 15px; }
.s1 { width: 68px; }
.s2 { width: 66px; }
.s2 i { width: 40px; height: 16px; background: #c1c0d2; }
.s3 { width: 98px; }
.s4 { width: 98px; }
.s3 span { flex: 1; text-align: center; padding-right: 6px; }
.s4 span { flex: 1; text-align: left; padding: 0 6px; }
.msg { width: 58px; height: 17px; margin: 2px auto 0 299px; background: #c0bfd2; }
.status .ver { width: 64px; justify-content: space-between; }
.ver svg { width: 18px; height: 18px; color: #5d5276; }
.ver span { text-align: center; color: #4a3a6a; }
</style>
